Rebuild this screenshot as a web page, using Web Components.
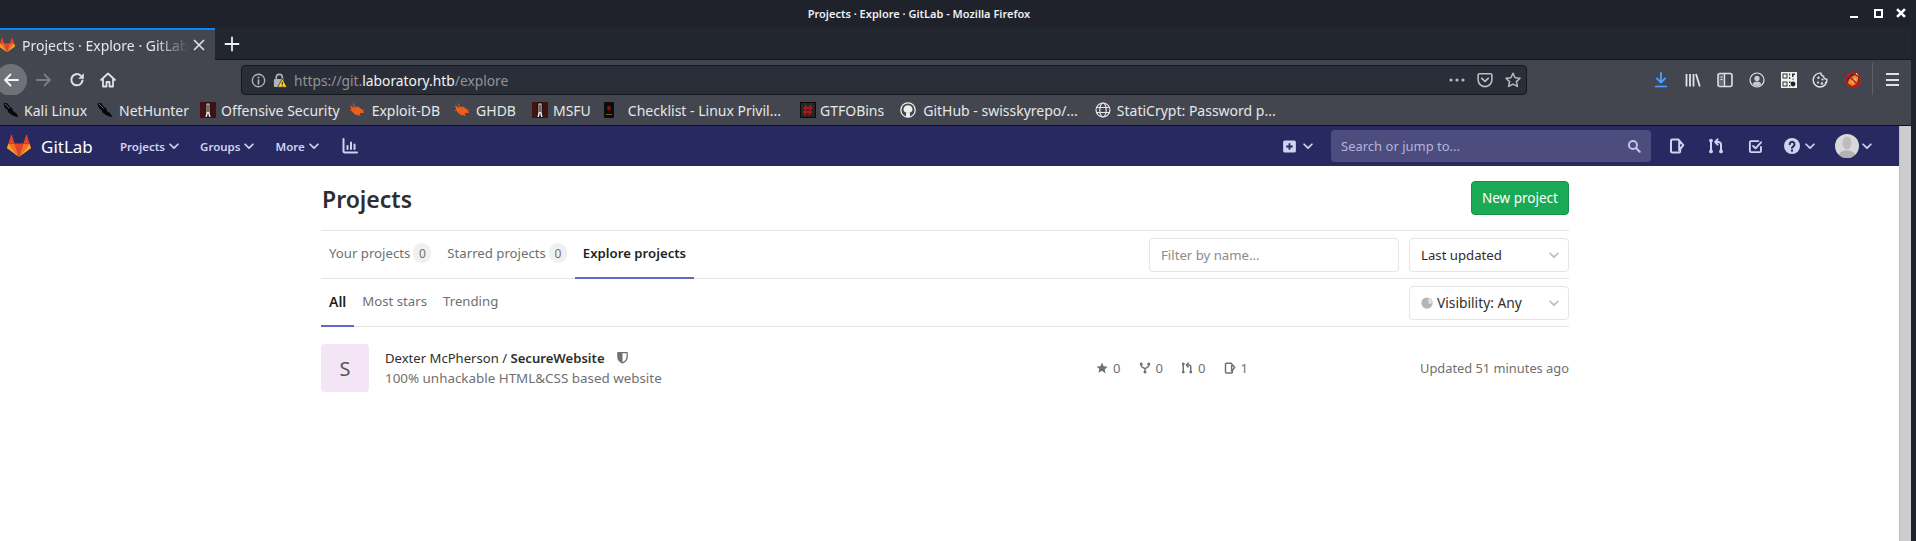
<!DOCTYPE html>
<html lang="en">
<head>
<meta charset="utf-8">
<title>Projects · Explore · GitLab</title>
<style>
html, body { margin: 0; height: 541px; overflow: hidden; background: #1f232b; font-family: "Noto Sans", sans-serif; }
body { display: flex; }
fx-window { width: 1911px; flex: none; }
</style>
</head>
<body>
<fx-window>
  <fx-titlebar>Projects · Explore · GitLab - Mozilla Firefox</fx-titlebar>
  <fx-tabstrip>Projects · Explore · GitLab</fx-tabstrip>
  <fx-toolbar></fx-toolbar>
  <fx-bookmarks>
    <fx-bookmark icon="kali" gap="5" next="10">Kali Linux</fx-bookmark>
    <fx-bookmark icon="kali" gap="6" next="11">NetHunter</fx-bookmark>
    <fx-bookmark icon="offsec" gap="5" next="9">Offensive Security</fx-bookmark>
    <fx-bookmark icon="bug" gap="7" next="14">Exploit-DB</fx-bookmark>
    <fx-bookmark icon="bug" gap="6" next="16">GHDB</fx-bookmark>
    <fx-bookmark icon="offsec" gap="5" next="10">MSFU</fx-bookmark>
    <fx-bookmark icon="checklist" gap="11" next="19">Checklist - Linux Privil...</fx-bookmark>
    <fx-bookmark icon="gtfo" gap="4" next="16">GTFOBins</fx-bookmark>
    <fx-bookmark icon="github" gap="7" next="17">GitHub - swisskyrepo/...</fx-bookmark>
    <fx-bookmark icon="globe" gap="6" next="0">StatiCrypt: Password p...</fx-bookmark>
  </fx-bookmarks>
  <gl-app>
    <gl-navbar></gl-navbar>
    <gl-page>
      <gl-project-row
        namespace="Dexter McPherson / "
        name="SecureWebsite"
        description="100% unhackable HTML&amp;CSS based website"
        updated="Updated 51 minutes ago"></gl-project-row>
    </gl-page>
  </gl-app>
</fx-window>

<script>
const ICONS = {
  chevron: '<polyline points="3.5,6 8,10.5 12.5,6" fill="none" stroke="currentColor" stroke-width="2" stroke-linecap="round" stroke-linejoin="round"/>',
  tanuki: '<g transform="scale(.444)"><path fill="#e24329" d="M18 34.5L24.63 14.09H11.37L18 34.5z"/><path fill="#fc6d26" d="M18 34.5L11.37 14.09H2.08L18 34.5z"/><path fill="#fca326" d="M2.08 14.09L.07 20.28c-.18.56.02 1.18.5 1.53L18 34.5 2.08 14.09z"/><path fill="#e24329" d="M2.08 14.09h9.29L7.38 1.79c-.21-.63-1.1-.63-1.31 0L2.08 14.09z"/><path fill="#fc6d26" d="M18 34.5l6.63-20.41h9.29L18 34.5z"/><path fill="#fca326" d="M33.92 14.09l2.01 6.19c.18.56-.02 1.18-.5 1.53L18 34.5l15.92-20.41z"/><path fill="#e24329" d="M33.92 14.09h-9.29l3.99-12.3c.21-.63 1.1-.63 1.31 0l3.99 12.3z"/></g>',
  activity: '<path d="M1.5 1v12a1.5 1.5 0 0 0 1.5 1.5h12" fill="none" stroke="currentColor" stroke-width="2" stroke-linecap="round"/><path d="M5.5 8v3M9 4.5V11M12.5 6.5V11" stroke="currentColor" stroke-width="2" stroke-linecap="round"/>',
  plusbox: '<path fill="currentColor" fill-rule="evenodd" d="M3 1.5h10A1.8 1.8 0 0 1 14.8 3.3v9.4A1.8 1.8 0 0 1 13 14.5H3a1.8 1.8 0 0 1-1.8-1.8V3.3A1.8 1.8 0 0 1 3 1.5zM7 4.5v2.5H4.5v2H7v2.5h2V9h2.5V7H9V4.5z"/>',
  search: '<circle cx="6.8" cy="6.8" r="4.6" fill="none" stroke="currentColor" stroke-width="2.2"/><path d="M10.5 10.5l4 4" stroke="currentColor" stroke-width="2.4" stroke-linecap="round"/>',
  issues: '<path d="M3.2 1.6h6.3l4.8 5.6-3.1 4v2.1a1.2 1.2 0 0 1-1.2 1.2h-6.8a1.2 1.2 0 0 1-1.2-1.2V2.8a1.2 1.2 0 0 1 1.2-1.2zM10.2 2v11" fill="none" stroke="currentColor" stroke-width="2" stroke-linejoin="round"/>',
  merge: '<g fill="none" stroke="currentColor" stroke-width="2" stroke-linecap="round" stroke-linejoin="round"><path d="M3 3v10M13 13V6.5A2.5 2.5 0 0 0 10.5 4H8"/><path d="M9.6 1.4L7.2 4l2.4 2.6"/></g><circle cx="3" cy="2.6" r="1.9" fill="currentColor"/><circle cx="3" cy="13.4" r="1.9" fill="currentColor"/><circle cx="13" cy="13.4" r="1.9" fill="currentColor"/>',
  todo: '<g fill="none" stroke="currentColor" stroke-width="2" stroke-linecap="round" stroke-linejoin="round"><path d="M11 2.2H3.2A1.2 1.2 0 0 0 2 3.4v9.4A1.2 1.2 0 0 0 3.2 14h9.4a1.2 1.2 0 0 0 1.2-1.2V8.5"/><path d="M5.5 7.5L8 10l6-6.5"/></g>',
  help: '<circle cx="8" cy="8" r="8" fill="currentColor"/><path d="M5.7 6.2A2.4 2.4 0 1 1 9.3 8.3C8.5 8.8 8 9.2 8 10" fill="none" stroke="#292961" stroke-width="2" stroke-linecap="round"/><circle cx="8" cy="12.6" r="1.2" fill="#292961"/>',
  star: '<path fill="currentColor" d="M8 .8l2.2 4.9 5.3.6-3.9 3.6 1.1 5.3L8 11.5l-4.7 2.7 1.1-5.3L.5 6.3l5.3-.6z"/>',
  fork: '<g fill="none" stroke="currentColor" stroke-width="2" stroke-linecap="round" stroke-linejoin="round"><path d="M3 3v1.5c0 2 1.5 2.5 5 4.5 3.500-2 5-2.500 5-4.500V3M8 9v4"/></g><circle cx="3" cy="2.7" r="2" fill="currentColor"/><circle cx="13" cy="2.7" r="2" fill="currentColor"/><circle cx="8" cy="13.3" r="2" fill="currentColor"/>',
  shield: '<path d="M2.3 2h11.4v5.500c0 3.400-2.600 5.800-5.700 7-3.100-1.200-5.700-3.600-5.700-7z" fill="#fff" stroke="currentColor" stroke-width="1.6" stroke-linejoin="round"/><path fill="currentColor" d="M2.5 2H8v12.500C4.900 13.300 2.500 10.900 2.500 7.500z"/>',
  globe: '<circle cx="8" cy="8" r="7.5" fill="#b5b5b5"/><path fill="#e2e2e2" d="M10 1.500c2.500.7 4.300 2.800 4.800 5.300l-1.800 3-2.500-1L9.500 6z"/>',
  back: '<path d="M15 8H2M7.5 2.500L2 8l5.500 5.500" fill="none" stroke="currentColor" stroke-width="1.8" stroke-linecap="round" stroke-linejoin="round"/>',
  forward: '<path d="M1 8h13M8.5 2.500L14 8l-5.500 5.500" fill="none" stroke="currentColor" stroke-width="1.8" stroke-linecap="round" stroke-linejoin="round"/>',
  reload: '<path d="M13.5 8.500A5.600 5.600 0 1 1 11.500 3.400" fill="none" stroke="currentColor" stroke-width="2" stroke-linecap="round"/><path fill="currentColor" d="M14.8 1.200v5.600H9.200z"/>',
  home: '<path d="M1 8l7-6.500L15 8M3 7v7.500h3.500V10h3v4.500H13V7" fill="none" stroke="currentColor" stroke-width="1.8" stroke-linecap="round" stroke-linejoin="round"/>',
  close: '<path d="M3.5 3.500l9 9M12.500 3.500l-9 9" stroke="currentColor" stroke-width="1.7" stroke-linecap="round"/>',
  winclose: '<path d="M3.500 3.500l9 9M12.500 3.500l-9 9" stroke="currentColor" stroke-width="3"/>',
  plus: '<path d="M8 1.500v13M1.500 8h13" stroke="currentColor" stroke-width="1.8" stroke-linecap="round"/>',
  info: '<circle cx="8" cy="8" r="6.6" fill="none" stroke="currentColor" stroke-width="1.5"/><path d="M8 7.500v4" stroke="currentColor" stroke-width="1.8" stroke-linecap="round"/><circle cx="8" cy="4.8" r="1.1" fill="currentColor"/>',
  lock: '<path d="M4.500 7V4.800a3.300 3.300 0 0 1 6.600 0V7" fill="none" stroke="#b1b3b8" stroke-width="1.7"/><rect x="2" y="6.500" width="10.500" height="8.500" rx="1.200" fill="#b1b3b8"/><path d="M11 6l5 9.200H6z" fill="#ffd21f" stroke="#2a2e38" stroke-width=".8"/><path d="M11 9.500v3" stroke="#3a2d00" stroke-width="1.2"/><circle cx="11" cy="13.9" r=".6" fill="#3a2d00"/>',
  dots: '<circle cx="2" cy="8" r="1.6" fill="currentColor"/><circle cx="8" cy="8" r="1.6" fill="currentColor"/><circle cx="14" cy="8" r="1.6" fill="currentColor"/>',
  pocket: '<path d="M2.400 1.800h11.200a1.300 1.300 0 0 1 1.300 1.300v4.700A6.900 6.900 0 0 1 8 14.600a6.900 6.900 0 0 1-6.900-6.800V3.100a1.300 1.300 0 0 1 1.300-1.300z" fill="none" stroke="currentColor" stroke-width="1.6"/><path d="M4.800 6.300L8 9.400l3.200-3.100" fill="none" stroke="currentColor" stroke-width="1.8" stroke-linecap="round" stroke-linejoin="round"/>',
  bookmarkstar: '<path d="M8 1.200l2.100 4.500 4.900.6-3.600 3.300 1 4.800L8 12.100l-4.400 2.300 1-4.800L1 6.300l4.900-.6z" fill="none" stroke="currentColor" stroke-width="1.5" stroke-linejoin="round"/>',
  download: '<path d="M6 1v9M2 6.500L6 10.500 10 6.500" fill="none" stroke="currentColor" stroke-width="1.9" stroke-linecap="round" stroke-linejoin="round"/><path d="M0 14.500h12" stroke="currentColor" stroke-width="1.6"/>',
  library: '<path d="M1.500 2v12.500M5 2v12.500M8.500 2v12.500M11 2l3.800 12.500" fill="none" stroke="currentColor" stroke-width="1.8"/>',
  sidebar: '<rect x="1" y="1.500" width="14" height="13" rx="2" fill="none" stroke="currentColor" stroke-width="1.6"/><rect x="2" y="2.500" width="5" height="11" fill="currentColor" opacity=".25"/><path d="M7.500 2v12" stroke="currentColor" stroke-width="1.4"/><path d="M3.500 5h2M3.500 7.500h2" stroke="currentColor" stroke-width="1.2"/>',
  account: '<circle cx="8" cy="8" r="7" fill="none" stroke="currentColor" stroke-width="1.2"/><circle cx="8" cy="6.4" r="2.6" fill="currentColor" opacity=".85"/><path d="M3.600 12.300c.8-2.300 2.400-2.900 4.400-2.900s3.600.6 4.400 2.900A6 6 0 0 1 3.600 12.300z" fill="currentColor" opacity=".85"/>',
  qr: '<rect width="16" height="16" fill="#f2f2f2"/><path fill="#333" fill-rule="evenodd" d="M1.500 1.500h5v5h-5zM2.500 2.500v3h3v-3zM1.500 9.500h5v5h-5zM2.500 10.500v3h3v-3z"/><path fill="#333" d="M8 1.500h1.200v2H8zM11 1.500h3v1.500h-1.500v2H11zM8 5h1.200v2H8zM11.500 6.500h1.200v1.200h-1.200z"/><circle cx="12" cy="12" r="2.400" fill="#222"/><path fill="#333" d="M8 9.500h1.600v1.600H8zM8 13h1.200v1.500H8z"/>',
  cookie: '<path d="M8 1.200a3 3 0 0 0 2.600 2.900 2.800 2.800 0 0 0 3.300 3A6.900 6.900 0 1 1 8 1.200z" fill="none" stroke="currentColor" stroke-width="1.4" stroke-linejoin="round"/><g fill="currentColor"><circle cx="5.500" cy="5.800" r="1.200"/><circle cx="9.500" cy="7.500" r="1.100"/><circle cx="5" cy="10.500" r="1.100"/><circle cx="9" cy="11.500" r="1.200"/><circle cx="12.500" cy="10.500" r=".8"/></g>',
  blocked: '<circle cx="8" cy="8" r="7" fill="#3a3436"/><path d="M3 11.500c0-4 3-7 7-8.500l3 2c.8 3.500-1.500 8-6 9z" fill="#ec8a2c"/><path d="M6 9.500l4-3.500 1 2-3 3z" fill="#f6c15a"/><circle cx="8" cy="8" r="7" fill="none" stroke="#c8161c" stroke-width="1.8"/><path d="M3 3l10 10" stroke="#c8161c" stroke-width="1.6"/><path d="M11 1l1.800 2.200" stroke="#f0f0f0" stroke-width="1"/>',
  kali: '<path d="M.5 1.500l3.500-.5 3 4 2 1 1 3 3.500 2.500 1.800 3.500-3-.4L9 13 5.500 10.500 4.500 8 2 6 1 3.500z" fill="#060709"/><path d="M2 2l4.500 4.500" stroke="#a4a8ae" stroke-width=".6"/>',
  offsec: '<rect width="16" height="16" fill="#1d0c0c"/><rect width="5.500" height="16" fill="#4a1717" opacity=".8"/><rect x="10.500" width="5.500" height="16" fill="#451515" opacity=".8"/><path d="M6.500 1.500h3v8l1 5.500H9L8 10.500 7 15H5.500l1-5.500z" fill="#eee"/><path d="M7.400 2.500h1.200v7.500H7.400z" fill="#1d0c0c"/>',
  bug: '<path d="M1 3.500l4 2 4-1 4 3 2 3.500h-3.500l-2.500 2.500-3-1-3-3-1-3z" fill="#e8601c"/><path d="M4 1.500L6 5M1 8.500L4 8M11 14l-1-3M15 8l-3 1" stroke="#e8601c" stroke-width="1"/>',
  checklist: '<rect x="3" width="10" height="16" rx="1" fill="#0c0c0c"/><path d="M6 6l2-3 2 3-1 2.500H7z" fill="#8a1212"/><rect x="5" y="12" width="6" height="1" fill="#7a5a10"/>',
  gtfo: '<rect x=".5" y=".5" width="15" height="15" fill="#26262a" stroke="#0a0a0a"/><path d="M6 3L5 13M10.500 3l-1 10M3.500 6h9M3 10h9" stroke="#b01616" stroke-width="2"/>',
  github: '<circle cx="8" cy="8" r="7.2" fill="none" stroke="#eee" stroke-width="1.3"/><path d="M8 3.200c-2.700 0-4.500 1.800-4.500 4 0 1.800 1 3 3 3.400-.4.400-.5.900-.5 1.400v3h4v-3c0-.5-.1-1-.5-1.400 2-.4 3-1.600 3-3.400 0-2.200-1.800-4-4.500-4z" fill="#eee"/>',
  webglobe: '<g fill="none" stroke="#e4e4e6" stroke-width="1.2"><circle cx="8" cy="8" r="7"/><ellipse cx="8" cy="8" rx="3.2" ry="7"/><path d="M1.500 5.500h13M1.500 10.500h13"/></g>',
  avatar: '<defs><clipPath id="c"><circle cx="12" cy="12" r="12"/></clipPath></defs><g clip-path="url(#c)"><rect width="24" height="24" fill="#d9d9d9"/><ellipse cx="12" cy="9" rx="4.600" ry="6.500" fill="#bdbdbd"/><path d="M2 24c1-5 5-6.500 7-7.500h6c2 1 6 2.500 7 7.500z" fill="#b3b3b3"/></g>'
};

class XIcon extends HTMLElement {
  connectedCallback() {
    const size = this.getAttribute('size') || 16;
    const name = this.getAttribute('name');
    const vb = name === 'avatar' ? '0 0 24 24' : name === 'download' ? '0 0 12 16' : '0 0 16 16';
    const w = this.getAttribute('w') || size;
    const root = this.shadowRoot || this.attachShadow({mode: 'open'});
    root.innerHTML = `
      <style>
        :host { display: inline-flex; flex: none; width: ${w}px; height: ${size}px; }
        svg { display: block; width: 100%; height: 100%; overflow: visible; }
      </style>
      <svg viewBox="${vb}" xmlns="http://www.w3.org/2000/svg">${ICONS[name] || ''}</svg>`;
  }
}
customElements.define('x-icon', XIcon);

class FxWindow extends HTMLElement {
  constructor() {
    super();
    this.attachShadow({mode: 'open'}).innerHTML = `
      <style>
        :host { display: flex; flex-direction: column; height: 541px; overflow: hidden; background: #22262f; }
      </style>
      <slot></slot>`;
  }
}
customElements.define('fx-window', FxWindow);

class FxTitlebar extends HTMLElement {
  constructor() {
    super();
    this.attachShadow({mode: 'open'}).innerHTML = `
      <style>
        :host { display: flex; align-items: center; height: 28px; padding-bottom: 2px; box-sizing: border-box; background: #1f222b; color: #eef0f3; }
        .title { flex: 1; padding-right: 12px; text-align: center; font-size: 11px; font-weight: 600; white-space: nowrap; }
        .ctl { display: flex; align-items: center; padding-right: 3px; }
        .min { width: 8px; height: 2px; margin: 8px 16px 0 0; background: #fff; }
        .max { width: 5px; height: 5px; margin-right: 11px; border: 2px solid #fff; }
        .x { color: #fff; }
      </style>
      <div class="title"><slot></slot></div>
      <div class="ctl">
        <div class="min"></div>
        <div class="max"></div>
        <x-icon class="x" name="winclose" size="14"></x-icon>
      </div>`;
  }
}
customElements.define('fx-titlebar', FxTitlebar);

class FxTabstrip extends HTMLElement {
  constructor() {
    super();
    this.attachShadow({mode: 'open'}).innerHTML = `
      <style>
        :host { display: flex; align-items: stretch; height: 32px; background: #22262f; box-shadow: inset 0 -1px 0 #14171c; overflow: hidden; }
        .tab { display: flex; align-items: center; width: 215px; box-sizing: border-box; border-top: 2px solid #0a84ff; background: #43464e; color: #e6e7ea; font-size: 14px; }
        .fav { margin-left: -1px; }
        .label { width: 167px; margin-left: 7px; overflow: hidden; white-space: nowrap;
          -webkit-mask-image: linear-gradient(to right, #000 80%, transparent);
          mask-image: linear-gradient(to right, #000 80%, transparent); }
        .close { margin-left: 2px; color: #e0e1e4; }
        .new { display: flex; align-items: center; margin-left: 9px; color: #f0f0f2; }
      </style>
      <div class="tab">
        <x-icon class="fav" name="tanuki" size="16"></x-icon>
        <div class="label"><slot></slot></div>
        <x-icon class="close" name="close" size="16"></x-icon>
      </div>
      <div class="new"><x-icon name="plus" size="16"></x-icon></div>`;
  }
}
customElements.define('fx-tabstrip', FxTabstrip);

class FxToolbar extends HTMLElement {
  constructor() {
    super();
    this.attachShadow({mode: 'open'}).innerHTML = `
      <style>
        :host { display: flex; align-items: center; height: 35px; background: #43464e; color: #e0e1e4; overflow: hidden; }
        .back { flex: none; display: flex; align-items: center; justify-content: center; width: 32px; height: 32px; margin-left: -5px; margin-top: 4px; border-radius: 50%; background: #6f7278; color: #f4f4f5; }
        .nav { display: flex; align-items: center; margin-top: 4px; }
        .fwd { margin-left: 9px; color: #7b7e85; }
        .rel { margin-left: 17px; }
        .home { margin-left: 15px; }
        .url { flex: none; display: flex; align-items: center; box-sizing: border-box; width: 1286px; height: 30px; margin: 5px 0 0 125px; border: 1px solid #14171c; border-radius: 4px; background: #2a2e38; }
        .info { margin-left: 9px; color: #b1b3b8; }
        .lock { margin-left: 6px; }
        .addr { flex: 1; margin-left: 7px; font-size: 13.8px; color: #8f939a; white-space: nowrap; }
        .addr b { font-weight: 400; color: #f2f3f5; }
        .page-actions { display: flex; align-items: center; gap: 12px; padding-right: 5px; color: #b9bbc0; }
        .tools { display: flex; align-items: center; gap: 16px; margin-left: 128px; margin-top: 4px; }
        .dl { color: #45a1ff; margin-right: 2px; }
        .sep { flex: none; width: 1px; height: 34px; margin: 4px 13px 0 11px; background: #5d6067; }
        .burger { flex: none; display: flex; flex-direction: column; gap: 3.5px; width: 13px; margin-top: 4px; }
        .burger i { display: block; height: 2px; background: #e0e1e4; }
      </style>
      <div class="back"><x-icon name="back" size="16"></x-icon></div>
      <div class="nav">
        <x-icon class="fwd" name="forward" size="16"></x-icon>
        <x-icon class="rel" name="reload" size="16"></x-icon>
        <x-icon class="home" name="home" size="16"></x-icon>
      </div>
      <div class="url">
        <x-icon class="info" name="info" size="15"></x-icon>
        <x-icon class="lock" name="lock" size="15"></x-icon>
        <div class="addr">https://git.<b>laboratory.htb</b>/explore</div>
        <div class="page-actions">
          <x-icon name="dots" size="16"></x-icon>
          <x-icon name="pocket" size="16"></x-icon>
          <x-icon name="bookmarkstar" size="16"></x-icon>
        </div>
      </div>
      <div class="tools">
        <x-icon class="dl" name="download" size="16" w="12"></x-icon>
        <x-icon name="library" size="16"></x-icon>
        <x-icon name="sidebar" size="16"></x-icon>
        <x-icon name="account" size="16"></x-icon>
        <x-icon name="qr" size="16"></x-icon>
        <x-icon name="cookie" size="16"></x-icon>
        <x-icon name="blocked" size="16"></x-icon>
      </div>
      <div class="sep"></div>
      <div class="burger"><i></i><i></i><i></i></div>`;
  }
}
customElements.define('fx-toolbar', FxToolbar);

class FxBookmarks extends HTMLElement {
  constructor() {
    super();
    this.attachShadow({mode: 'open'}).innerHTML = `
      <style>
        :host { display: flex; align-items: center; height: 31px; padding-left: 3px; box-sizing: border-box; background: #43464e; border-bottom: 1px solid #101216; }
      </style>
      <slot></slot>`;
  }
}
customElements.define('fx-bookmarks', FxBookmarks);

class FxBookmark extends HTMLElement {
  connectedCallback() {
    const icon = this.getAttribute('icon') === 'globe' ? 'webglobe' : this.getAttribute('icon');
    const root = this.shadowRoot || this.attachShadow({mode: 'open'});
    root.innerHTML = `
      <style>
        :host { display: flex; align-items: center; flex: none; margin-right: ${this.getAttribute('next') || 0}px; color: #e6e7ea; font-size: 14px; white-space: nowrap; }
        span { margin-left: ${this.getAttribute('gap') || 6}px; }
      </style>
      <x-icon name="${icon}" size="16"></x-icon><span><slot></slot></span>`;
  }
}
customElements.define('fx-bookmark', FxBookmark);

class GlApp extends HTMLElement {
  constructor() {
    super();
    this.attachShadow({mode: 'open'}).innerHTML = `
      <style>
        :host { display: grid; grid-template-columns: 1fr 12px; grid-template-rows: 40px 1fr; flex: 1; min-height: 0; background: #fff; }
        ::slotted(gl-navbar) { grid-column: 1; grid-row: 1; }
        ::slotted(gl-page) { grid-column: 1; grid-row: 2; }
        .scroll { grid-column: 2; grid-row: 1 / 3; background: #cdcdcd; border-left: 1px solid #bdbdbd; box-sizing: border-box; }
      </style>
      <slot></slot>
      <div class="scroll"></div>`;
  }
}
customElements.define('gl-app', GlApp);

class GlNavItem extends HTMLElement {
  constructor() {
    super();
    this.attachShadow({mode: 'open'}).innerHTML = `
      <style>
        :host { display: flex; align-items: center; gap: 2px; color: #d1d1f0; font-size: 11.5px; font-weight: 600; white-space: nowrap; }
        x-icon { color: #d1d1f0; }
      </style>
      <slot></slot><x-icon name="chevron" size="14"></x-icon>`;
  }
}
customElements.define('gl-nav-item', GlNavItem);

class GlNavbar extends HTMLElement {
  constructor() {
    super();
    this.attachShadow({mode: 'open'}).innerHTML = `
      <style>
        :host { display: flex; align-items: center; height: 40px; background: #292961; color: #d1d1f0; font-family: "Noto Sans", sans-serif; }
        .logo { margin-left: 7px; }
        .brand { margin-left: 10px; width: 79px; color: #fff; font-size: 17px; line-height: 1; }
        .links { display: flex; align-items: center; gap: 19px; }
        .act { margin-left: 21px; }
        .spacer { flex: 1; }
        .add-chev { margin-left: 4px; }
        .search { display: flex; align-items: center; justify-content: space-between; box-sizing: border-box; width: 320px; height: 32px; margin: 0 18px 0 16px; padding: 0 10px; border-radius: 4px; background: #4c4c7e; color: #b5b5dc; font-size: 13px; }
        .search x-icon { color: #c5c5e6; }
        .merge { margin-left: 23px; }
        .todo { margin-left: 24px; }
        .help { display: flex; align-items: center; margin-left: 21px; }
        .help .chev { margin-left: 3px; }
        .user { display: flex; align-items: center; margin: 0 25px 0 18px; }
        .user .chev { margin-left: 1px; }
      </style>
      <x-icon class="logo" name="tanuki" size="24"></x-icon>
      <div class="brand">GitLab</div>
      <div class="links">
        <gl-nav-item>Projects</gl-nav-item>
        <gl-nav-item>Groups</gl-nav-item>
        <gl-nav-item>More</gl-nav-item>
      </div>
      <x-icon class="act" name="activity" size="16"></x-icon>
      <div class="spacer"></div>
      <x-icon name="plusbox" size="15"></x-icon>
      <x-icon class="add-chev" name="chevron" size="14"></x-icon>
      <div class="search"><span>Search or jump to...</span><x-icon name="search" size="14"></x-icon></div>
      <x-icon name="issues" size="16"></x-icon>
      <x-icon class="merge" name="merge" size="16"></x-icon>
      <x-icon class="todo" name="todo" size="15"></x-icon>
      <div class="help"><x-icon name="help" size="16"></x-icon><x-icon class="chev" name="chevron" size="14"></x-icon></div>
      <div class="user"><x-icon name="avatar" size="24"></x-icon><x-icon class="chev" name="chevron" size="14"></x-icon></div>`;
  }
}
customElements.define('gl-navbar', GlNavbar);

class GlPage extends HTMLElement {
  constructor() {
    super();
    this.attachShadow({mode: 'open'}).innerHTML = `
      <style>
        :host { display: block; padding: 0 330px 0 321px; background: #fff; color: #2e2e2e; font-size: 13.2px; }
        .head { display: flex; align-items: center; justify-content: space-between; height: 64px; box-sizing: border-box; }
        h1 { margin: 3px 0 0 1px; font-size: 23px; font-weight: 600; line-height: 1; color: #2e2e2e; }
        .btn { display: flex; align-items: center; justify-content: center; box-sizing: border-box; width: 98px; height: 34px; border: 1px solid #168f48; border-radius: 4px; background: #1aaa55; color: #fff; font-size: 13.5px; }
        .row { display: flex; align-items: stretch; justify-content: space-between; border-top: 1px solid #e5e5e5; box-sizing: border-box; }
        .row.top { height: 48px; }
        .row.sub { height: 48px; }
        .row.end { height: 1px; }
        .tabs { display: flex; align-items: stretch; }
        .tab { display: flex; align-items: center; gap: 3px; padding: 0 8px 2px; color: #707070; border-bottom: 2px solid transparent; margin-bottom: -1px; white-space: nowrap; }
        .tab.on { color: #1f1f1f; font-weight: 600; border-bottom-color: #6666c4; }
        .tab.all { font-size: 14px; }
        .n { display: flex; align-items: center; justify-content: center; width: 18px; height: 20px; border-radius: 10px; background: #f0f0f0; color: #707070; font-size: 12px; }
        .tools { display: flex; align-items: center; gap: 10px; }
        .filter { box-sizing: border-box; width: 250px; height: 34px; padding: 0 11px; display: flex; align-items: center; border: 1px solid #e5e5e5; border-radius: 4px; color: #8c8c8c; }
        .dd { display: flex; align-items: center; justify-content: space-between; box-sizing: border-box; width: 160px; height: 34px; padding: 0 7px 0 11px; border: 1px solid #e5e5e5; border-radius: 4px; color: #2e2e2e; }
        .dd x-icon { color: #bdbdbd; }
        .dd span { display: flex; align-items: center; gap: 4px; }
        .vis { font-size: 13.8px; }
      </style>
      <div class="head"><h1>Projects</h1><div class="btn">New project</div></div>
      <div class="row top">
        <div class="tabs">
          <div class="tab">Your projects <span class="n">0</span></div>
          <div class="tab">Starred projects <span class="n">0</span></div>
          <div class="tab on">Explore projects</div>
        </div>
        <div class="tools">
          <div class="filter">Filter by name...</div>
          <div class="dd"><span>Last updated</span><x-icon name="chevron" size="14"></x-icon></div>
        </div>
      </div>
      <div class="row sub">
        <div class="tabs">
          <div class="tab on all">All</div>
          <div class="tab">Most stars</div>
          <div class="tab">Trending</div>
        </div>
        <div class="tools">
          <div class="dd"><span class="vis"><x-icon name="globe" size="12"></x-icon>Visibility: Any</span><x-icon name="chevron" size="14"></x-icon></div>
        </div>
      </div>
      <div class="row end"></div>
      <slot></slot>`;
  }
}
customElements.define('gl-page', GlPage);

class GlProjectRow extends HTMLElement {
  connectedCallback() {
    const a = n => this.getAttribute(n).replace(/&/g, '&amp;');
    const root = this.shadowRoot || this.attachShadow({mode: 'open'});
    root.innerHTML = `
      <style>
        :host { display: flex; align-items: center; padding-top: 17px; color: #707070; font-size: 13.1px; }
        .av { display: flex; align-items: center; justify-content: center; flex: none; width: 48px; height: 48px; border-radius: 4px; background: #f3e5f5; color: #555; font-size: 20px; }
        .txt { margin-left: 16px; width: 540px; flex: none; }
        .name { display: flex; align-items: center; color: #2e2e2e; height: 21px; white-space: pre; }
        .name b { font-weight: 600; }
        .name x-icon { margin-left: 11px; color: #707070; }
        .desc { height: 21px; line-height: 21px; font-size: 13.4px; white-space: nowrap; }
        .stats { display: flex; align-items: center; margin-left: 171px; flex: none; }
        .s { display: flex; align-items: center; gap: 5px; margin-right: 18px; }
        .up { flex: 1; text-align: right; white-space: nowrap; font-size: 12.85px; }
      </style>
      <div class="av">S</div>
      <div class="txt">
        <div class="name"><span>${a('namespace')}</span><b>${a('name')}</b><x-icon name="shield" size="13"></x-icon></div>
        <div class="desc">${a('description')}</div>
      </div>
      <div class="stats">
        <div class="s"><x-icon name="star" size="12"></x-icon>0</div>
        <div class="s"><x-icon name="fork" size="12"></x-icon>0</div>
        <div class="s"><x-icon name="merge" size="12"></x-icon>0</div>
        <div class="s"><x-icon name="issues" size="12"></x-icon>1</div>
      </div>
      <div class="up">${a('updated')}</div>`;
  }
}
customElements.define('gl-project-row', GlProjectRow);
</script>
</body>
</html>
